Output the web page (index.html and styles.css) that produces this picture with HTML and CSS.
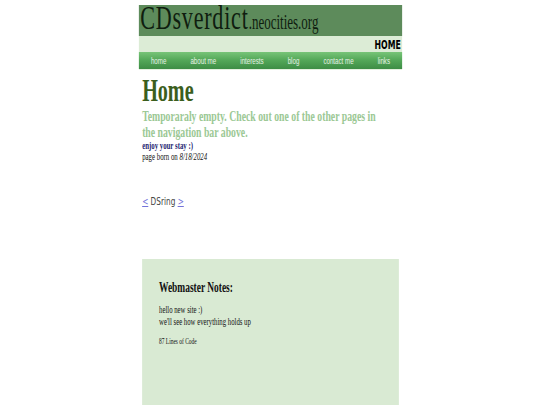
FILE: index.html
```html
<!DOCTYPE html>
<html lang="en">
<head>
<meta charset="utf-8">
<title>CDsverdict.neocities.org</title>
<link rel="stylesheet" href="styles.css">
</head>
<body>
<div class="site">
  <header class="banner">
    <div class="logo"><span class="logo-big">CDsverdict</span><span class="logo-small">.neocities.org</span></div>
    <div class="band"><span class="band-title">HOME</span></div>
    <nav class="nav">
      <a href="#">home</a>
      <a href="#">about me</a>
      <a href="#">interests</a>
      <a href="#">blog</a>
      <a href="#">contact me</a>
      <a href="#">links</a>
    </nav>
  </header>
  <main class="content">
    <h1 class="title">Home</h1>
    <p class="sub">Temporaraly empty. Check out one of the other pages in the navigation bar above.</p>
    <p class="enjoy">enjoy your stay :)</p>
    <p class="born">page born on <em>8/18/2024</em></p>
    <p class="ring"><a href="#">&lt;</a> DSring <a href="#">&gt;</a></p>
    <section class="notes">
      <h3 class="notes-title">Webmaster Notes:</h3>
      <p class="notes-text">hello new site :)<br>we'll see how everything holds up</p>
      <p class="notes-lines">87 Lines of Code</p>
    </section>
  </main>
</div>
</body>
</html>
```
FILE: styles.css
```css
html, body {
  margin: 0;
  padding: 0;
  background: #ffffff;
  overflow: hidden;
}

body {
  font-family: "Liberation Serif", "Times New Roman", serif;
  color: #111;
}

/* the whole site is drawn in a horizontally condensed form */
.site {
  width: 405px;
  margin: 5px auto 0;
  transform: scaleX(0.65);
  transform-origin: 50% 0;
}

.logo {
  height: 31px;
  line-height: 26px;
  background: #5d8b5b;
  padding-left: 2px;
  color: #0f1d0f;
  white-space: nowrap;
}

.logo-big {
  font-size: 34px;
  letter-spacing: 1.2px;
}

.logo-small {
  font-size: 20px;
}

.band {
  height: 16px;
  line-height: 16px;
  background: #dcecd6;
  text-align: right;
  padding-right: 2px;
}

.band-title {
  font-family: "DejaVu Sans", Verdana, sans-serif;
  font-weight: bold;
  font-size: 12px;
  color: #000;
}

.nav {
  height: 17px;
  display: flex;
  justify-content: space-around;
  align-items: center;
  background: linear-gradient(#78c478 0%, #55a95a 45%, #3d8d45 100%);
  border-bottom: 1px solid #e4f1e0;
}

.nav a {
  font-family: "Liberation Sans", Arial, sans-serif;
  font-size: 9.5px;
  color: #e8f2e8;
  text-decoration: none;
}

.content {
  padding: 7px 5px 0;
}

.content p {
  margin: 0;
}

.title {
  margin: 0;
  font-size: 31px;
  line-height: 28px;
  font-weight: bold;
  color: #3b5e1d;
}

.content .sub {
  margin-top: 3px;
  max-width: 382px;
  font-size: 15px;
  line-height: 16px;
  font-weight: bold;
  color: #9bc894;
}

.enjoy {
  font-size: 10.5px;
  line-height: 11px;
  font-weight: bold;
  color: #1f1f73;
}

.born {
  font-size: 10.5px;
  line-height: 11px;
  color: #111;
}

.content .ring {
  margin-top: 33px;
  font-family: "DejaVu Sans", Verdana, sans-serif;
  font-size: 11.3px;
  line-height: 13px;
  color: #444;
}

.ring a {
  color: #7373d9;
  text-decoration: underline;
}

.notes {
  margin-top: 51px;
  height: 150px;
  box-sizing: border-box;
  padding: 20px 26px 0;
  background: #d9ead3;
}

.notes-title {
  margin: 0;
  font-size: 14.5px;
  line-height: 17px;
  font-weight: bold;
  color: #111;
}

.content .notes-text {
  margin-top: 8px;
  font-size: 10.4px;
  line-height: 11.5px;
}

.content .notes-lines {
  margin-top: 10px;
  font-size: 8.4px;
  line-height: 10px;
}
```
